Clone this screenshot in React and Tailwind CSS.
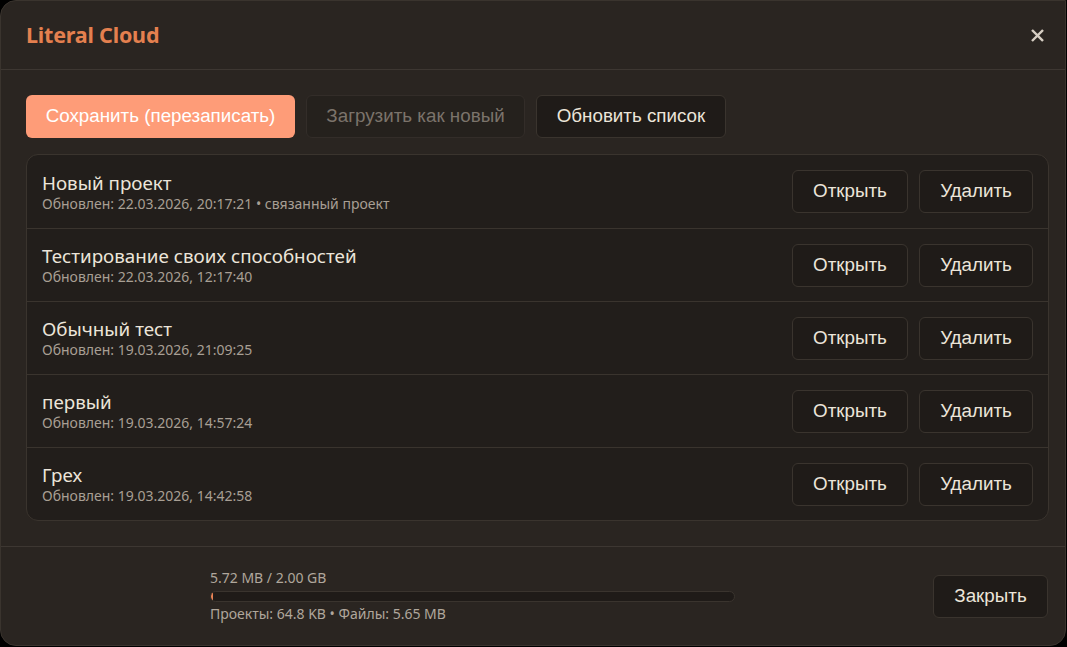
import React from 'react';

const projects = [
    { name: 'Новый проект', updated: '22.03.2026, 20:17:21', linked: true },
    { name: 'Тестирование своих способностей', updated: '22.03.2026, 12:17:40' },
    { name: 'Обычный тест', updated: '19.03.2026, 21:09:25' },
    { name: 'первый', updated: '19.03.2026, 14:57:24' },
    { name: 'Грех', updated: '19.03.2026, 14:42:58' },
];

const btn = "h-[43px] rounded-md border border-[#3a342e] bg-[#1f1b18] text-[#ece5da] text-[18.8px] font-['Liberation_Sans',Arial,sans-serif]";

const App = () => {
    return (
        <div className="w-[1067px] h-[647px] bg-black overflow-hidden">
            <div className="w-[1066px] h-[646px] bg-[#2a2521] border border-[#3a342e] rounded-tl-2xl rounded-bl-2xl rounded-br-2xl flex flex-col font-['Noto_Sans',sans-serif]">
                {/* Header */}
                <div className="h-[69px] shrink-0 flex items-center justify-between pl-[25px] pr-[16px] border-b border-[#3d3732]">
                    <h1 className="text-[21.5px] font-bold text-[#e4804f] tracking-[-0.2px]">Literal Cloud</h1>
                    <button className="text-[#d6cec3] w-6 h-6 flex items-center justify-center">
                        <svg width="13" height="13" viewBox="0 0 14 14" fill="none" stroke="currentColor" strokeWidth="2.6" strokeLinecap="square">
                            <path d="M2 2L12 12M12 2L2 12" />
                        </svg>
                    </button>
                </div>

                {/* Body */}
                <div className="flex-1 px-[25px] pt-[25px]">
                    <div className="flex gap-[11px]">
                        <button className="h-[43px] w-[269px] rounded-md bg-[#fe9c78] text-white text-[18.8px] font-['Liberation_Sans',Arial,sans-serif]">
                            Сохранить (перезаписать)
                        </button>
                        <button className="h-[43px] w-[219px] rounded-md border border-[#332d29] bg-[#25211d] text-[#7b736b] text-[18.8px] font-['Liberation_Sans',Arial,sans-serif]">
                            Загрузить как новый
                        </button>
                        <button className={`${btn} w-[190px]`}>Обновить список</button>
                    </div>

                    <div className="mt-[16px] w-[1023px] rounded-xl border border-[#3a342e] bg-[#221e1b]">
                        {projects.map((p, i) => (
                            <div
                                key={p.name}
                                className={`h-[73px] flex items-center justify-between pl-[15px] pr-[15px] ${i > 0 ? 'border-t border-[#3a342e]' : ''}`}
                            >
                                <div className="flex flex-col">
                                    <span className="text-[18.8px] leading-[24px] text-[#ece5da]">{p.name}</span>
                                    <span className="text-[14px] leading-[18px] text-[#a89f94]">
                                        Обновлен: {p.updated}{p.linked ? ' • связанный проект' : ''}
                                    </span>
                                </div>
                                <div className="flex gap-[11px]">
                                    <button className={`${btn} w-[116px]`}>Открыть</button>
                                    <button className={`${btn} w-[114px]`}>Удалить</button>
                                </div>
                            </div>
                        ))}
                    </div>
                </div>

                {/* Footer */}
                <div className="h-[99px] shrink-0 border-t border-[#3d3732] flex items-center justify-between pl-[209px] pr-[17px]">
                    <div className="flex flex-col w-[525px]">
                        <span className="text-[14px] leading-[18px] text-[#b0a79c]">5.72 MB / 2.00 GB</span>
                        <div className="mt-[4px] h-[11px] rounded-full border border-[#3a342e] bg-[#1f1b18] overflow-hidden">
                            <div className="h-full w-[2px] bg-[#e98355]" />
                        </div>
                        <span className="mt-[3px] text-[14px] leading-[18px] text-[#b0a79c]">Проекты: 64.8 KB • Файлы: 5.65 MB</span>
                    </div>
                    <button className={`${btn} w-[115px]`}>Закрыть</button>
                </div>
            </div>
        </div>
    );
};

export default App;
